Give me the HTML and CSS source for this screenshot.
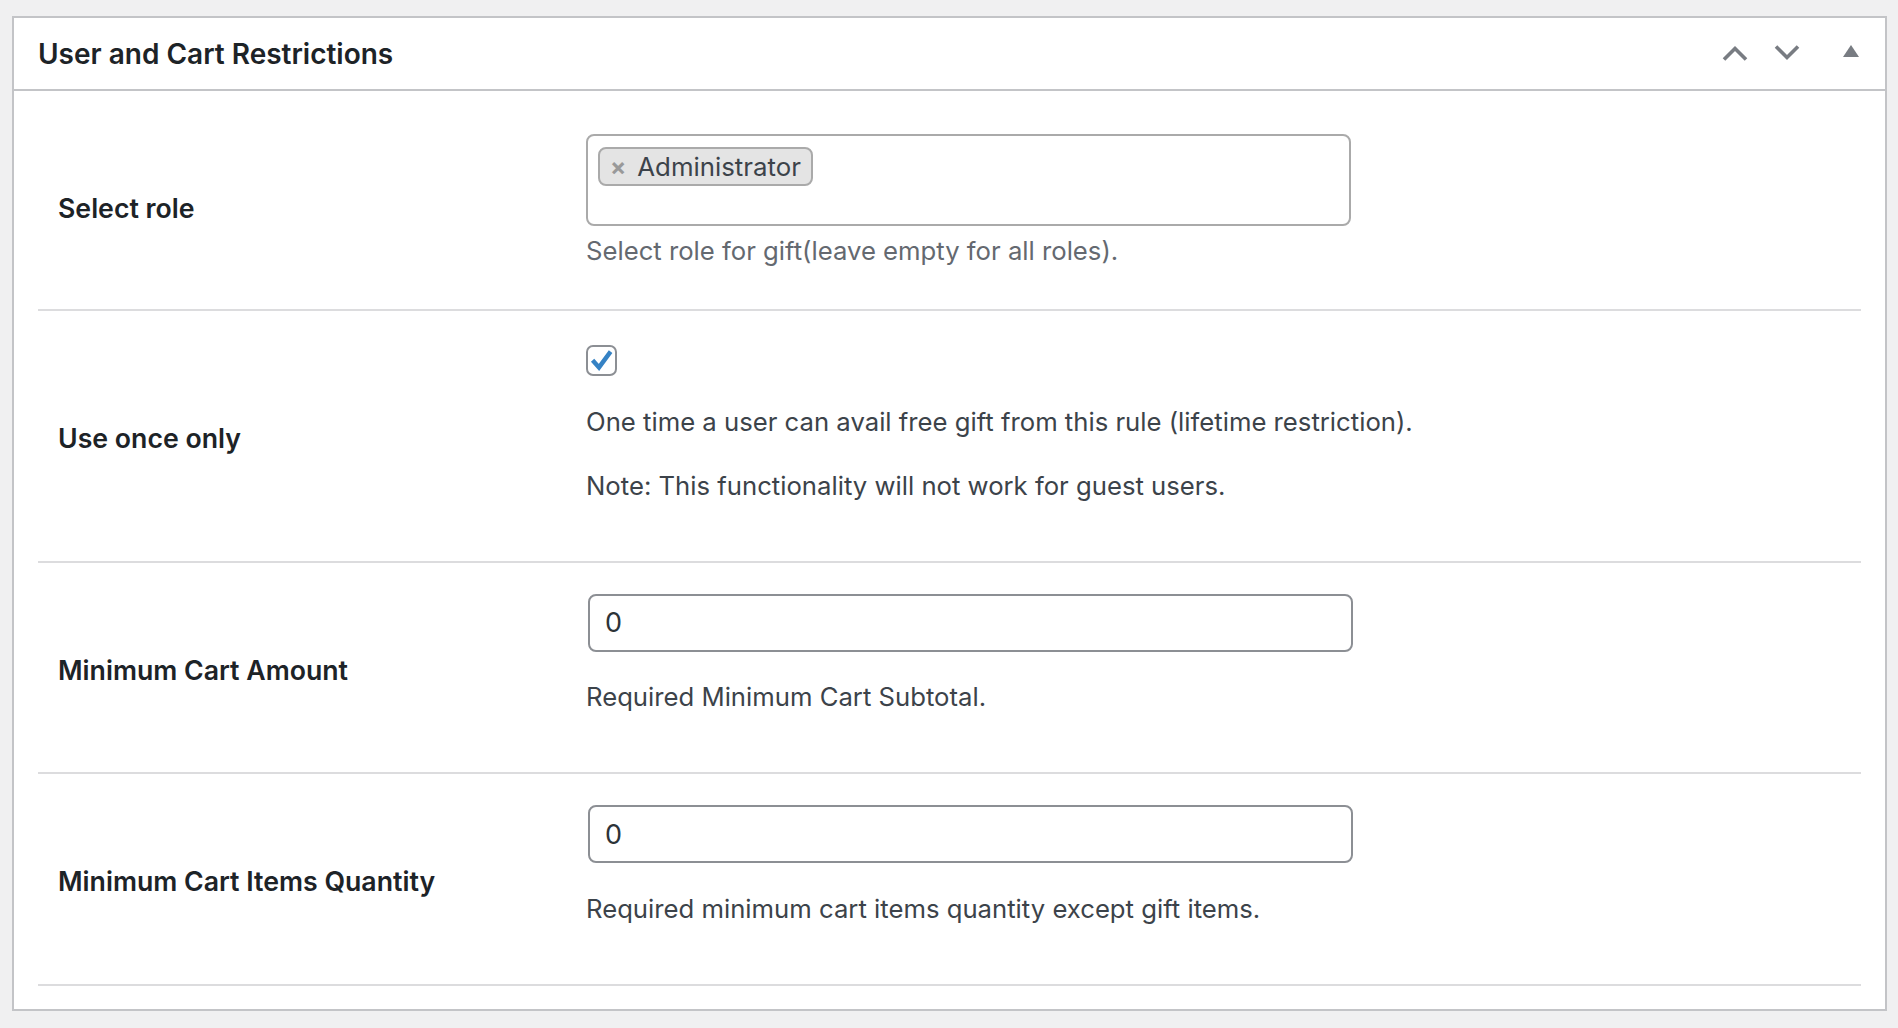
FILE: index.html
```html
<!DOCTYPE html>
<html lang="en">
<head>
    <meta charset="UTF-8">
    <meta name="viewport" content="width=device-width, initial-scale=1.0">
    <title>User and Cart Restrictions</title>
    <link rel="stylesheet" href="styles.css">
</head>
<body>
    <div class="postbox">
        <div class="postbox-header">
            <h2>User and Cart Restrictions</h2>
            <div class="handle-actions">
                <button class="handle-btn" type="button" aria-label="Move up">
                    <svg width="26" height="16" viewBox="0 0 26 16"><path d="M2 14.5 L13 3.5 L24 14.5" fill="none" stroke="#787c82" stroke-width="3.6"/></svg>
                </button>
                <button class="handle-btn" type="button" aria-label="Move down">
                    <svg width="26" height="16" viewBox="0 0 26 16"><path d="M2 1.5 L13 12.5 L24 1.5" fill="none" stroke="#787c82" stroke-width="3.6"/></svg>
                </button>
                <button class="handle-btn toggle" type="button" aria-label="Toggle panel">
                    <svg width="16" height="12" viewBox="0 0 16 12"><path d="M0 12 L8 0 L16 12 Z" fill="#787c82"/></svg>
                </button>
            </div>
        </div>

        <div class="inside">
            <div class="form-row">
                <div class="field-label">Select role</div>
                <div class="field first">
                    <div class="multi-select">
                        <span class="choice"><span class="choice-remove">×</span>Administrator</span>
                    </div>
                    <p class="description muted">Select role for gift(leave empty for all roles).</p>
                </div>
            </div>

            <div class="form-row">
                <div class="field-label">Use once only</div>
                <div class="field">
                    <span class="checkbox">
                        <svg width="27" height="27" viewBox="0 0 27 27"><path d="M4.6 13.2 L11 20.4 L22.6 4.6" fill="none" stroke="#3582c4" stroke-width="4.4" stroke-linejoin="miter"/></svg>
                    </span>
                    <p class="description">One time a user can avail free gift from this rule (lifetime restriction).</p>
                    <p class="description note">Note: This functionality will not work for guest users.</p>
                </div>
            </div>

            <div class="form-row">
                <div class="field-label">Minimum Cart Amount</div>
                <div class="field">
                    <input class="text-input" type="text" value="0">
                    <p class="description">Required Minimum Cart Subtotal.</p>
                </div>
            </div>

            <div class="form-row">
                <div class="field-label">Minimum Cart Items Quantity</div>
                <div class="field">
                    <input class="text-input" type="text" value="0">
                    <p class="description">Required minimum cart items quantity except gift items.</p>
                </div>
            </div>
        </div>
    </div>
</body>
</html>
```

FILE: styles.css
```css
* {
    box-sizing: border-box;
    margin: 0;
    padding: 0;
    font-family: Inter, "Noto Sans", sans-serif;
}

body {
    background-color: #f0f0f1;
    padding: 16px 11px 0 12px;
}

.postbox {
    background-color: #fff;
    border: 2px solid #c3c4c7;
}

.postbox-header {
    display: flex;
    align-items: center;
    height: 73px;
    padding-left: 24px;
    border-bottom: 2px solid #c3c4c7;
}

.postbox-header h2 {
    flex: 1;
    font-size: 28px;
    font-weight: 600;
    color: #1d2327;
}

.handle-actions {
    display: flex;
    align-items: center;
    height: 100%;
}

.handle-btn {
    width: 52px;
    height: 100%;
    display: flex;
    align-items: center;
    justify-content: center;
    background: none;
    border: none;
    cursor: pointer;
    padding-bottom: 2px;
}

.handle-btn.toggle {
    width: 72px;
    padding: 0 0 6px 4px;
}

.inside {
    padding: 11px 24px 23px;
}

.form-row {
    display: grid;
    grid-template-columns: 548px 1fr;
    border-bottom: 2px solid #dcdcde;
}

.field-label {
    align-self: center;
    padding: 5px 0 0 20px;
    font-size: 26.7px;
    font-weight: 600;
    color: #1d2327;
}

.field {
    padding: 31px 0 55px;
}

.field.first {
    padding: 32px 0 38px;
}

.description {
    margin-top: 25.5px;
    font-size: 25.7px;
    line-height: 40px;
    color: #3c434a;
}

.description.muted {
    margin-top: 5px;
    color: #646970;
}

.description.note {
    margin-top: 24px;
}

.multi-select {
    width: 765px;
    height: 92px;
    padding: 11px 10px;
    border: 2px solid #aaa;
    border-radius: 8px;
}

.choice {
    display: inline-flex;
    align-items: center;
    height: 39px;
    padding: 0 10px 0 10px;
    background-color: #e4e4e4;
    border: 2px solid #aaa;
    border-radius: 8px;
    font-size: 25.8px;
    color: #3c434a;
}

.choice-remove {
    margin-right: 11px;
    font-size: 24px;
    font-weight: 700;
    color: #999;
}

.checkbox {
    display: flex;
    width: 31px;
    height: 31px;
    margin-top: 3px;
    border: 2px solid #8c8f94;
    border-radius: 7px;
}

.text-input {
    display: block;
    width: 765px;
    height: 58px;
    margin-left: 2px;
    padding: 0 15px;
    border: 2px solid #8c8f94;
    border-radius: 8px;
    font-size: 27px;
    color: #2c3338;
    outline: none;
}
```
